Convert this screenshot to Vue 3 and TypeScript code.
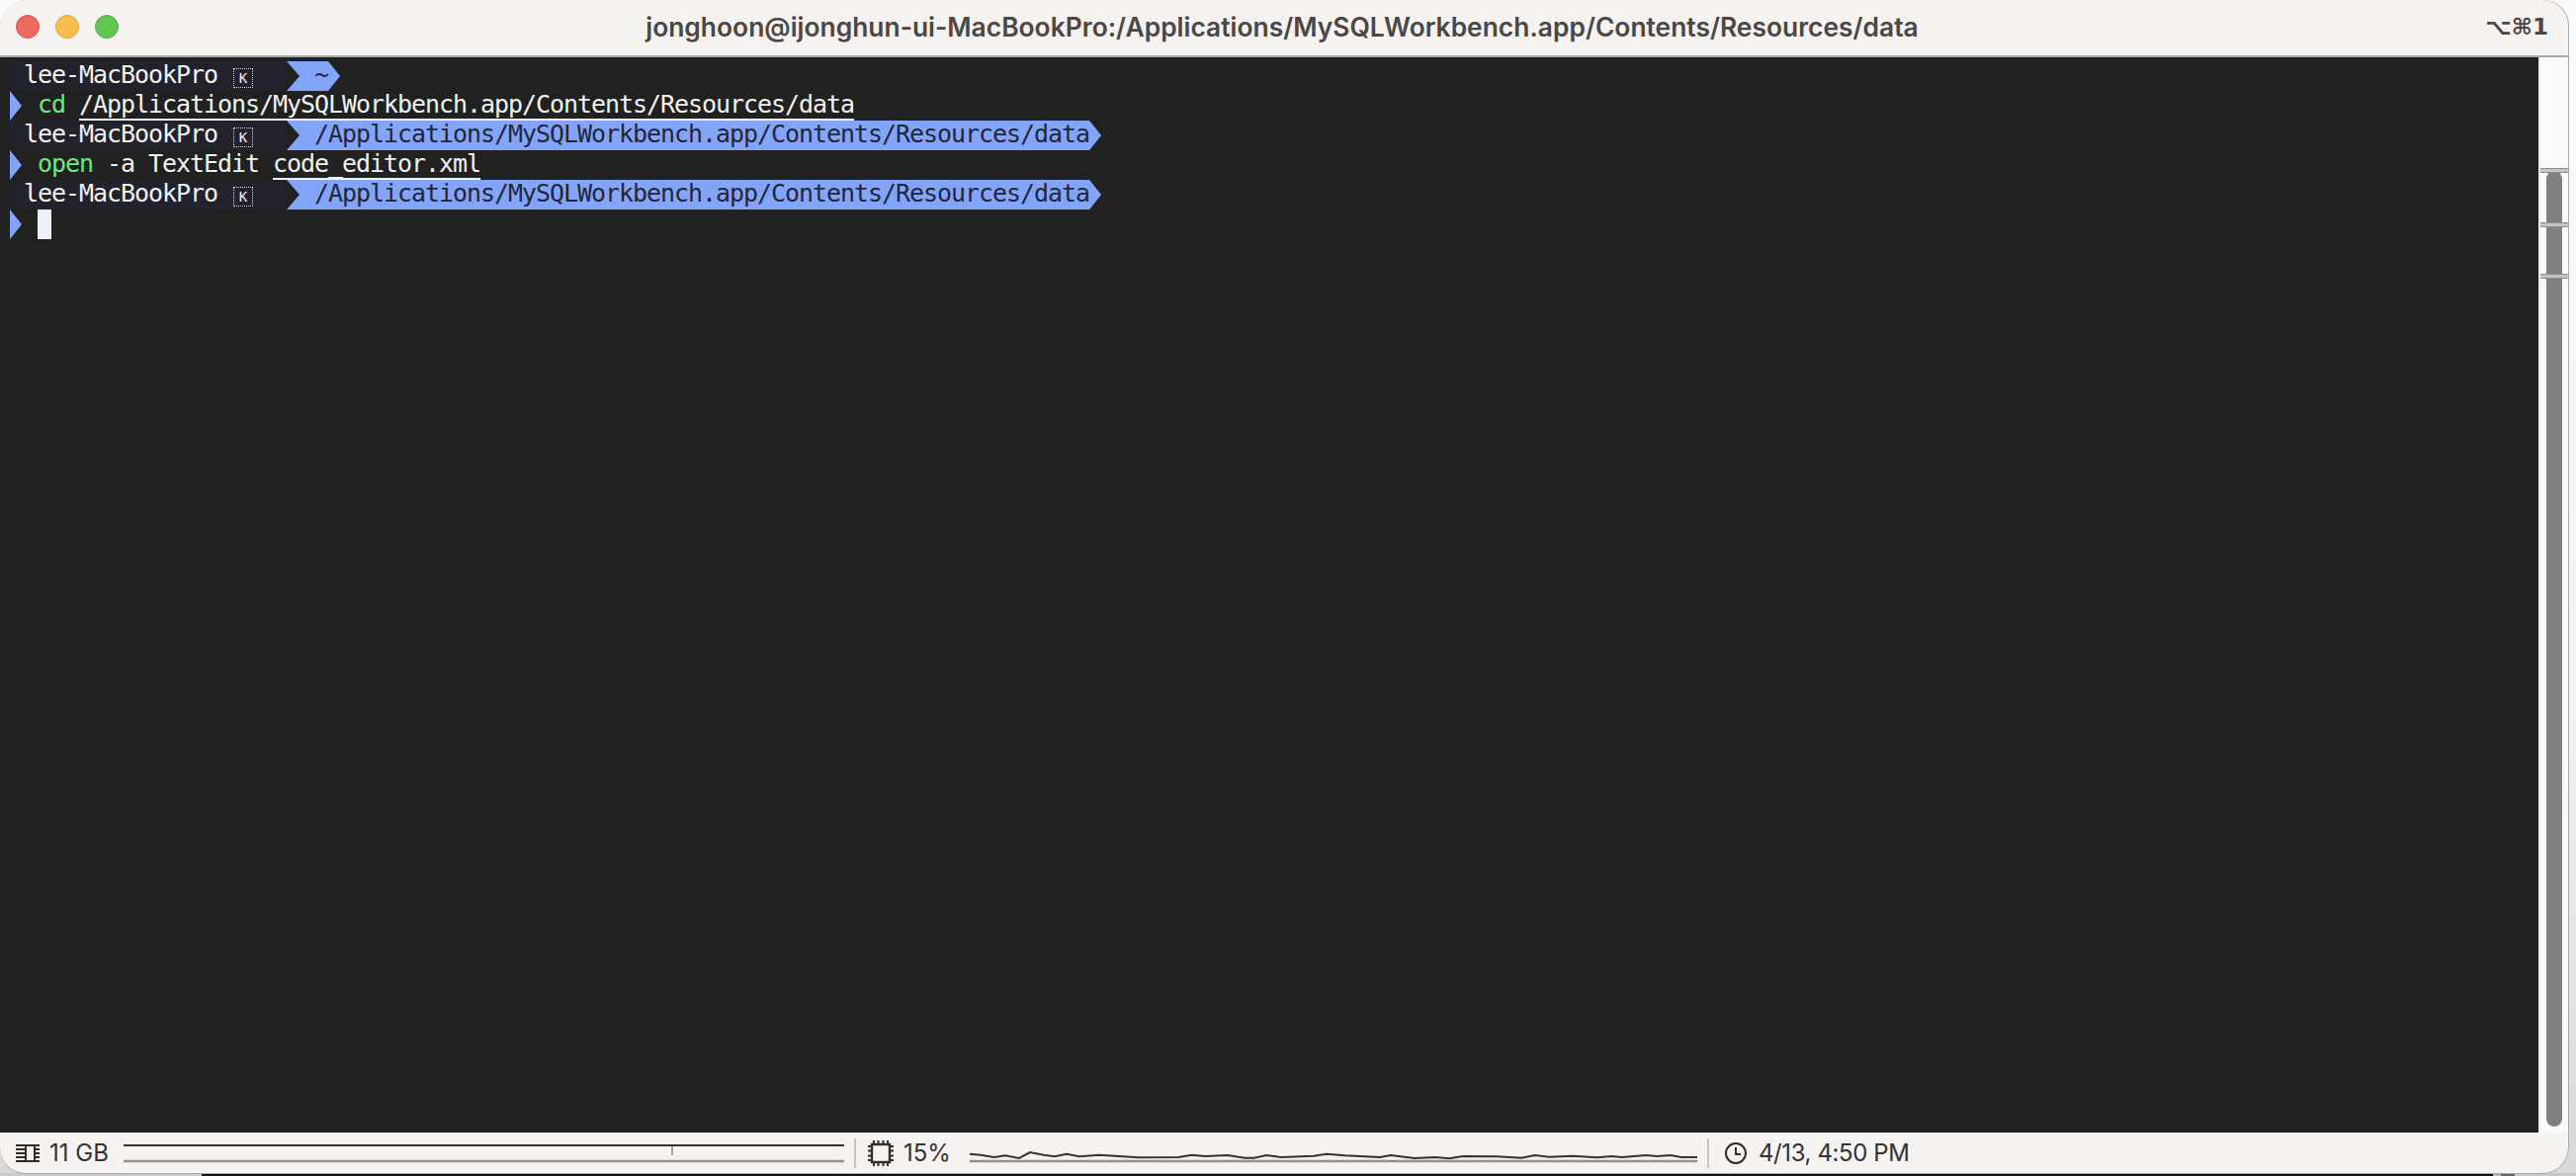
<script setup lang="ts">
const path = '/Applications/MySQLWorkbench.app/Contents/Resources/data'
const cpuPoints =
  '0,15.7 11,16.7 25,19 36,17.3 50,20 61,14 75,16.7 86,18.3 98,15.7 111,18.3 131,16.7 171,19.3 211,19 225,16.7 238,18 261,17 278,19.7 288,19.7 300,17 315,19 348,17.7 361,15.7 380,17.3 415,19 426,17 450,20 471,19 485,20.3 499,18 534,18.3 558,19.7 572,17 586,18.7 610,17.7 635,19.3 649,18 660,19 684,17 695,18 709,17 720,19 736,19'
</script>

<template>
  <div class="desktop">
    <div class="window">
      <header class="titlebar">
        <div class="lights">
          <span class="light red"></span>
          <span class="light yellow"></span>
          <span class="light green"></span>
        </div>
        <div class="title">jonghoon@ijonghun-ui-MacBookPro:/Applications/MySQLWorkbench.app/Contents/Resources/data</div>
        <div class="shortcut">⌥⌘1</div>
      </header>

      <main class="body">
        <section class="terminal">
          <div class="row">
            <div class="host"><span>lee-MacBookPro</span><span class="key">K</span></div>
            <div class="dir">~</div>
          </div>
          <div class="row">
            <span class="arrow"></span>
            <span class="green-text">cd</span><span class="sp"></span><span class="link">{{ path }}</span>
          </div>
          <div class="row">
            <div class="host"><span>lee-MacBookPro</span><span class="key">K</span></div>
            <div class="dir">{{ path }}</div>
          </div>
          <div class="row">
            <span class="arrow"></span>
            <span class="green-text">open</span><span class="sp"></span><span>-a TextEdit </span><span class="link">code_editor.xml</span>
          </div>
          <div class="row">
            <div class="host"><span>lee-MacBookPro</span><span class="key">K</span></div>
            <div class="dir">{{ path }}</div>
          </div>
          <div class="row">
            <span class="arrow"></span>
            <span class="cursor"></span>
          </div>
        </section>
        <aside class="scroller">
          <span class="thumb"></span>
          <span class="mark m1"></span>
          <span class="mark m2"></span>
          <span class="mark m3"></span>
        </aside>
      </main>

      <footer class="status">
        <svg class="i-mem" width="24" height="18" viewBox="0 0 24 18" fill="none" stroke="#2e2e2e" stroke-width="2">
          <path d="M0 1H24M0 17H24M0 5H10M0 9H10M0 13H10M19 5H24M19 9H24M19 13H24M10 1V17M19 1V17" />
        </svg>
        <span class="stat w-mem">11 GB</span>
        <svg class="graph g-mem" width="729" height="30" viewBox="0 0 729 30" fill="none">
          <path d="M0 7H729" stroke="#333" stroke-width="2" />
          <path d="M555 7V17" stroke="#555" stroke-width="1" />
          <path d="M0 23H729" stroke="#959190" stroke-width="2.5" />
        </svg>
        <span class="sep s1"></span>
        <svg class="i-cpu" width="26" height="26" viewBox="0 0 26 26" fill="none" stroke="#2e2e2e">
          <rect x="4" y="4" width="18" height="18" stroke-width="2.4" />
          <path d="M6 0V3M10.5 0V3M15.5 0V3M20 0V3M6 23V26M10.5 23V26M15.5 23V26M20 23V26M0 6H3M0 10.5H3M0 15.5H3M0 20H3M23 6H26M23 10.5H26M23 15.5H26M23 20H26" stroke-width="2" />
        </svg>
        <span class="stat w-cpu">15%</span>
        <svg class="graph g-cpu" width="736" height="30" viewBox="0 0 736 30" fill="none">
          <polyline :points="cpuPoints" stroke="#333" stroke-width="2" />
          <path d="M0 23H736" stroke="#959190" stroke-width="2.5" />
        </svg>
        <span class="sep s2"></span>
        <svg class="i-clock" width="22" height="22" viewBox="0 0 22 22" fill="none" stroke="#2e2e2e" stroke-width="2">
          <circle cx="11" cy="11" r="10" />
          <path d="M11 5V12H16" />
        </svg>
        <span class="stat w-time">4/13, 4:50 PM</span>
      </footer>
    </div>
  </div>
</template>

<style>
html,
body {
  margin: 0;
  background: #fff;
}
</style>

<style scoped>
.desktop {
  width: 2606px;
  height: 1190px;
  overflow: hidden;
  background:
    linear-gradient(to right, #c8c8c8 204px, #111 204px, #111 2522px, #b5b5b5 2522px, #b5b5b5 2530px, #666 2530px, #666 2544px, #c8c8c8 2544px) bottom / 100% 3px no-repeat,
    linear-gradient(to bottom, #fafafa, #f2f2f2 60%, #d8d8d8);
}
.window {
  width: 2598px;
  height: 1187px;
  border-radius: 26px;
  overflow: hidden;
  display: flex;
  flex-direction: column;
  background: #f5f2ef;
  box-shadow: 1px 0 0 #aaa, 0 1px 0 #aaa;
}
.titlebar {
  height: 58px;
  flex: none;
  box-sizing: border-box;
  display: grid;
  grid-template-columns: 1fr auto 1fr;
  align-items: center;
  padding: 0 20px 3px 16px;
  border-bottom: 2px solid #aaa8a6;
  color: #4a4746;
}
.lights {
  display: flex;
  gap: 16px;
}
.light {
  width: 24px;
  height: 24px;
  border-radius: 50%;
  box-sizing: border-box;
}
.red {
  background: #ee6a5f;
  border: 1px solid #d9574d;
}
.yellow {
  background: #f5bf4f;
  border: 1px solid #dfa43a;
}
.green {
  background: #62c554;
  border: 1px solid #53ae46;
}
.title {
  font: 600 26.4px "Inter", "Liberation Sans", sans-serif;
  white-space: nowrap;
}
.shortcut {
  justify-self: end;
  font: 700 23px "DejaVu Sans", sans-serif;
}
.body {
  flex: 1;
  min-height: 0;
  display: flex;
}
.terminal {
  flex: 1;
  background: #212121;
  padding: 4px 0 0 10px;
  color: #f2f2f2;
  font-family: "DejaVu Sans Mono", "Liberation Mono", monospace;
  font-size: 25px;
  letter-spacing: -1.05px;
}
.row {
  height: 30px;
  line-height: 28px;
  display: flex;
  align-items: flex-start;
  white-space: pre;
}
.host {
  width: 280px;
  height: 30px;
  box-sizing: border-box;
  padding-left: 14px;
  display: flex;
  align-items: flex-start;
  background: #21222c;
  flex: none;
}
.key {
  width: 20px;
  height: 20px;
  margin: 7px 0 0 16px;
  box-sizing: border-box;
  border: 1px dotted #d8d8d8;
  display: flex;
  align-items: center;
  justify-content: center;
  font-size: 14px;
  letter-spacing: 0;
}
.dir {
  height: 30px;
  padding: 0 12px 0 28px;
  background: #82a5fa;
  color: #22263a;
  clip-path: polygon(0 0, calc(100% - 12px) 0, 100% 50%, calc(100% - 12px) 100%, 0 100%, 13px 50%);
}
.arrow {
  width: 12px;
  height: 30px;
  flex: none;
  margin-right: 16px;
  background: #82a5fa;
  clip-path: polygon(0 0, 100% 50%, 0 100%);
}
.green-text {
  color: #6fe87f;
}
.sp {
  width: 14px;
  flex: none;
}
.link {
  text-decoration: underline 2px;
  text-underline-offset: 6px;
}
.cursor {
  width: 14px;
  height: 30px;
  background: #eef0f8;
}
.scroller {
  width: 30px;
  flex: none;
  position: relative;
  box-sizing: border-box;
  background: #fafafa;
  border-left: 2px solid #ececec;
}
.thumb {
  position: absolute;
  left: 6px;
  width: 16px;
  top: 115px;
  bottom: 6px;
  border-radius: 8px;
  background: #808080;
}
.mark {
  position: absolute;
  left: 0;
  right: 0;
  height: 5px;
  box-sizing: border-box;
  background: #c4c4c4;
  border-top: 1px solid #8e8e8e;
  border-bottom: 1px solid #8e8e8e;
}
.m1 {
  top: 112px;
}
.m2 {
  top: 167px;
}
.m3 {
  top: 219px;
}
.status {
  height: 41px;
  flex: none;
  display: flex;
  align-items: center;
  padding-left: 16px;
  color: #333;
  font: 400 24px "Inter", "Liberation Sans", sans-serif;
  white-space: nowrap;
}
.stat {
  flex: none;
}
.w-mem {
  width: 61px;
  margin-left: 10px;
}
.g-mem {
  margin-left: 14px;
}
.graph {
  flex: none;
}
.sep {
  width: 2px;
  height: 30px;
  flex: none;
  background: #c6c3c0;
}
.s1 {
  margin-left: 10px;
}
.i-cpu {
  flex: none;
  margin-left: 12px;
}
.w-cpu {
  width: 45px;
  margin-left: 10px;
}
.g-cpu {
  margin-left: 22px;
}
.s2 {
  margin-left: 10px;
}
.i-clock {
  flex: none;
  margin-left: 16px;
}
.w-time {
  margin-left: 12px;
  letter-spacing: -0.4px;
}
</style>
